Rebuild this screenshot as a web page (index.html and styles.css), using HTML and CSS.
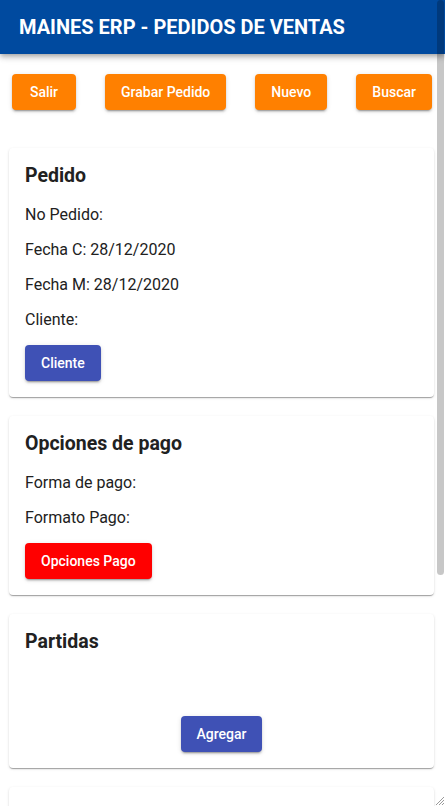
FILE: index.html
```html
<!DOCTYPE html>
<html lang="es">
<head>
<meta charset="utf-8">
<title>MAINES ERP - Pedidos de ventas</title>
<link rel="stylesheet" href="styles.css">
</head>
<body>
<div class="app">
  <header class="toolbar">
    <h1 class="toolbar-title">MAINES ERP - PEDIDOS DE VENTAS</h1>
  </header>
  <main class="content">
    <nav class="actions">
      <button class="btn btn-orange">Salir</button>
      <button class="btn btn-orange">Grabar Pedido</button>
      <button class="btn btn-orange">Nuevo</button>
      <button class="btn btn-orange">Buscar</button>
    </nav>

    <section class="card">
      <h2 class="card-title">Pedido</h2>
      <div class="fields">
        <p class="field">No Pedido:</p>
        <p class="field">Fecha C: 28/12/2020</p>
        <p class="field">Fecha M: 28/12/2020</p>
        <p class="field">Cliente:</p>
      </div>
      <div class="card-actions">
        <button class="btn btn-indigo">Cliente</button>
      </div>
    </section>

    <section class="card">
      <h2 class="card-title">Opciones de pago</h2>
      <div class="fields">
        <p class="field">Forma de pago:</p>
        <p class="field">Formato Pago:</p>
      </div>
      <div class="card-actions">
        <button class="btn btn-red">Opciones Pago</button>
      </div>
    </section>

    <section class="card">
      <h2 class="card-title">Partidas</h2>
      <div class="items"></div>
      <div class="card-actions center">
        <button class="btn btn-indigo">Agregar</button>
      </div>
    </section>

    <section class="card card-tall"></section>
  </main>
  <div class="scroll-thumb"></div>
  <svg class="resize-grip" width="12" height="12" viewBox="0 0 12 12">
    <path d="M11 3 L3 11 M11 6 L6 11 M11 9 L9 11" stroke="#9a9a9a" stroke-width="1" fill="none"/>
  </svg>
</div>
</body>
</html>
```

FILE: styles.css
```css
html, body {
  margin: 0;
  padding: 0;
  height: 100%;
  overflow: hidden;
  background: #ffffff;
}

body {
  font-family: Roboto, "Liberation Sans", Arial, sans-serif;
  color: #212121;
}

.app {
  position: relative;
  height: 100%;
  overflow: hidden;
}

.toolbar {
  position: relative;
  z-index: 2;
  height: 54px;
  background: #004a9f;
  display: flex;
  align-items: center;
  padding: 0 19px;
  box-shadow: 0 2px 4px -1px rgba(0,0,0,.2), 0 4px 5px 0 rgba(0,0,0,.14), 0 1px 10px 0 rgba(0,0,0,.12);
}

.toolbar-title {
  margin: 0;
  font-size: 20px;
  font-weight: 700;
  color: #ffffff;
  letter-spacing: 0;
}

.content {
  display: flex;
  flex-direction: column;
}

.actions {
  display: flex;
  justify-content: space-between;
  padding: 20px 13px 0 12px;
  margin-bottom: 38px;
}

.btn {
  height: 36px;
  min-width: 64px;
  padding: 0 16px;
  border: none;
  border-radius: 4px;
  font-family: Roboto, "Liberation Sans", Arial, sans-serif;
  font-size: 14px;
  font-weight: 500;
  color: #ffffff;
  box-shadow: 0 3px 1px -2px rgba(0,0,0,.2), 0 2px 2px 0 rgba(0,0,0,.14), 0 1px 5px 0 rgba(0,0,0,.12);
}

.btn-orange { background: #ff8000; }
.btn-indigo { background: #3f51b5; }
.btn-red { background: #ff0000; }

.card {
  margin: 0 11px 19px 9px;
  padding: 16px;
  background: #ffffff;
  border-radius: 4px;
  box-shadow: 0 2px 1px -1px rgba(0,0,0,.2), 0 1px 1px 0 rgba(0,0,0,.14), 0 1px 3px 0 rgba(0,0,0,.12);
}

.card-tall {
  height: 300px;
}

.card-title {
  margin: 0;
  font-size: 19.5px;
  line-height: 24px;
  font-weight: 700;
}

.fields {
  display: flex;
  flex-direction: column;
  gap: 16px;
  margin-top: 17px;
}

.field {
  margin: 0;
  font-size: 16px;
  line-height: 19px;
}

.card-actions {
  display: flex;
  margin-top: 16px;
}

.card-actions.center {
  justify-content: center;
}

.items {
  height: 46px;
}

.scroll-thumb {
  position: absolute;
  z-index: 3;
  top: 0;
  right: 1px;
  width: 7px;
  height: 575px;
  border-radius: 4px;
  background: rgba(0,0,0,.22);
}

.resize-grip {
  position: absolute;
  z-index: 3;
  right: 0;
  bottom: 0;
}
```
